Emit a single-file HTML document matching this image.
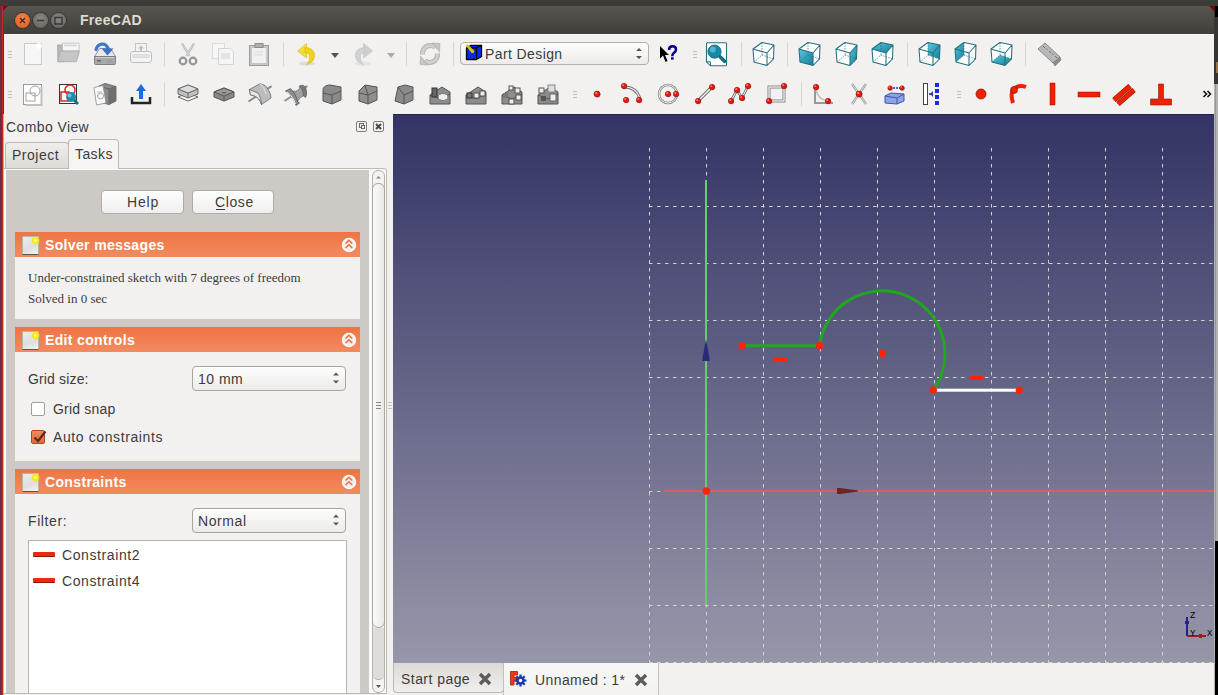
<!DOCTYPE html>
<html><head><meta charset="utf-8">
<style>
*{box-sizing:border-box}
html,body{margin:0;padding:0}
body{width:1218px;height:695px;overflow:hidden;position:relative;background:#3d3c38;font-family:"Liberation Sans",sans-serif;color:#3c3c3c}
.a{position:absolute}
.t{position:absolute;white-space:nowrap;line-height:1}
#lstrip{left:0;top:6px;width:3px;height:689px;background:#6b2c48;border-right:1px solid #c0282c}
#rstrip{left:1214px;top:6px;width:4px;height:689px;background:#363531}
#title{left:3px;top:6px;width:1211px;height:28px;background:linear-gradient(#57564f,#3f3e3a);border-radius:5px 5px 0 0}
#win{left:3px;top:34px;width:1211px;height:661px;background:#f2f1f0;border-top:1px solid #fbfbfa}
.wbtn{position:absolute;top:13px;width:15px;height:15px;border-radius:50%}
.grip{position:absolute;width:4px;height:8px;background:repeating-linear-gradient(#b9b6b0 0 1px,transparent 1px 3px)}
.sep{position:absolute;width:1px;background:#d4d1cc}
.ic{position:absolute}
.hdr{position:absolute;left:15px;width:345px;height:25px;background:linear-gradient(#ef7443,#f28b60)}
.hdr .tt{position:absolute;left:30px;top:6px;font-weight:bold;font-size:14px;color:#fff;line-height:1;letter-spacing:0.35px}
.hdr .pic{position:absolute;left:6.5px;top:3.5px;width:17px;height:19px;background:linear-gradient(160deg,#ececec,#dedede 60%,#f4f4f4);border:1px solid #b8b2ae;border-bottom:1.5px solid #5c5550}
.hdr .pic:after{content:"";position:absolute;right:-2px;top:-1px;width:9px;height:9px;border-radius:50%;background:radial-gradient(#ffffd0 0,#f4f000 35%,rgba(244,230,0,.7) 55%,rgba(240,224,0,0) 72%)}
.hdr .col{position:absolute;left:327px;top:5px;width:15px;height:15px;border-radius:50%;background:#f6f4f2}
.body{position:absolute;left:15px;width:345px;background:#f2f1f0}
.lbl{font-size:14px;color:#3c3c3c;letter-spacing:0.6px}
.combo{position:absolute;border:1px solid #a8a49e;border-radius:4px;background:linear-gradient(#fdfdfd,#ecebe9)}
.btn{position:absolute;border:1px solid #b0ada8;border-radius:4px;background:linear-gradient(#fefefe,#f0efee)}
</style></head><body>
<div id="lstrip" class="a"></div>
<div id="rstrip" class="a"></div>
<div class="a" style="left:1215px;top:6px;width:3px;height:11px;background:#000"></div>
<div class="a" style="left:1216px;top:62px;width:2px;height:11px;background:#9a7448"></div>
<div class="a" style="left:1214px;top:84px;width:4px;height:457px;background:linear-gradient(90deg,#b6b3ae 0 1px,#888785 1px,#b2b1ad 60%,#b8b7b3)"></div><div class="a" style="left:1214px;top:541px;width:1px;height:154px;background:#b6b3ae"></div>
<div class="a" style="left:1215px;top:541px;width:3px;height:154px;background:#000"></div>
<div id="title" class="a"></div>
<svg class="a" style="left:0;top:6px" width="1218" height="6"><path d="M3 0H8L3 5Z" fill="#7a0c10"/><path d="M1209 0H1215V6Z" fill="#6a0a0e"/></svg>
<div class="wbtn" style="left:15px;background:radial-gradient(circle at 50% 35%,#f5834f,#e2541d);box-shadow:0 0 0 1px #3a3935"></div>
<div class="wbtn" style="left:33px;background:radial-gradient(circle at 50% 35%,#8a8983,#5e5d58);box-shadow:0 0 0 1px #3a3935"></div>
<div class="wbtn" style="left:51px;background:radial-gradient(circle at 50% 35%,#8a8983,#5e5d58);box-shadow:0 0 0 1px #3a3935"></div>
<div class="t" style="left:80px;top:13px;font-size:14px;font-weight:bold;color:#dfdbd2;letter-spacing:0.3px">FreeCAD</div>
<div id="win" class="a"></div>
<div class="a" style="left:3px;top:34px;width:1px;height:80px;background:#3d403d"></div><div class="a" style="left:3px;top:114px;width:1px;height:581px;background:#b0b1ae"></div>


<!-- TOOLBAR -->
<svg class="a" style="left:0;top:33px" width="1218" height="81" viewBox="0 33 1218 81"><defs><linearGradient id="tealg" x1="0" y1="0" x2="1" y2="1"><stop offset="0" stop-color="#5ec4dc"/><stop offset="1" stop-color="#137f98"/></linearGradient></defs><path d="M8 51.5h4M8 54.5h4M8 57.5h4" stroke="#c2bfba" stroke-width="1"/><path d="M8 91.5h4M8 94.5h4M8 97.5h4" stroke="#c2bfba" stroke-width="1"/><g transform="translate(21,42)"><rect x="3.5" y="1.5" width="17" height="21" fill="#f7f7f7" stroke="#c9c9c9"/><circle cx="18" cy="4" r="3" fill="#fff" opacity=".9"/></g><g transform="translate(57,42)"><path d="M0.5 3H5.5L7 4.5V19.7H1Z" fill="#b8b8b8" stroke="#a0a0a0" stroke-width=".8"/><path d="M5.5 1.2H22V9H5.5Z" fill="#f6f6f6" stroke="#bcbcbc" stroke-width=".8"/><path d="M7 3.5H20" stroke="#d4d4d4" stroke-width="1.5"/><path d="M3.5 9H22.5L19.5 19.7H0.5Z" fill="#c6c6c6" stroke="#a8a8a8" stroke-width=".8"/></g><g transform="translate(93,42)"><path d="M6.5 6.5H17.5L22.5 14.5H1.5Z" fill="#e9e9e9" stroke="#8a8a8a" stroke-width=".9"/><path d="M1.5 14.5H22.5V21.5Q22.5 22.5 21.5 22.5H2.5Q1.5 22.5 1.5 21.5Z" fill="#a9a9a9" stroke="#777" stroke-width=".9"/><path d="M2.5 15.5H21.5" stroke="#d0d0d0"/><rect x="4" y="18" width="4" height="1.6" fill="#6a6a6a"/><path d="M15 18v3M17 18v3M19 18v3" stroke="#939393" stroke-width=".8"/><path d="M3 7.5C5 1 12 0 15 6" stroke="#3e78c8" stroke-width="3.2" fill="none" stroke-linecap="round"/><path d="M8.5 6.5H20.5L14.5 13.5Z" fill="#3a72c4"/></g><g transform="translate(129,42)"><rect x="6.5" y="1.5" width="11" height="10" fill="#f2f2f2" stroke="#c4c4c4"/><path d="M12 3.5l-3 3h2v3h2v-3h2Z" fill="#bdbdbd"/><rect x="1.5" y="9.5" width="21" height="11" rx="2.5" fill="#f4f4f4" stroke="#bebebe"/><rect x="3.5" y="12.5" width="17" height="3" rx="1" fill="#e2e2e2" stroke="#cfcfcf" stroke-width=".6"/></g><rect x="164" y="42" width="1" height="24" fill="#d8d5d0"/><g transform="translate(176,42)"><path d="M6 1.5L13.5 14M18 1.5L10.5 14" stroke="#b9b9b9" stroke-width="2.4" fill="none"/><path d="M6 1.5L13.5 14M18 1.5L10.5 14" stroke="#d8d8d8" stroke-width="1" fill="none"/><circle cx="7" cy="19" r="3.3" fill="none" stroke="#959595" stroke-width="2.2"/><circle cx="17" cy="19" r="3.3" fill="none" stroke="#959595" stroke-width="2.2"/></g><g transform="translate(211,42)"><rect x="1.5" y="1.5" width="12" height="15" fill="#f6f6f6" stroke="#dcdcdc"/><path d="M7.5 6.5h12l3 3v13h-15Z" fill="#f4f4f4" stroke="#d4d4d4"/><rect x="10" y="11" width="9" height="6" fill="#e4e4e4"/></g><g transform="translate(247,42)"><rect x="2.5" y="3.5" width="19" height="20" fill="#c6c6c6" stroke="#9c9c9c"/><rect x="5" y="6" width="14" height="15" fill="#f0f0f0"/><rect x="8" y="1.5" width="8" height="4" fill="#b0b0b0" stroke="#8c8c8c"/><path d="M8 10h8M8 13h8" stroke="#d8d8d8"/></g><rect x="283" y="42" width="1" height="24" fill="#d8d5d0"/><g transform="translate(295,42)"><ellipse cx="12" cy="21.5" rx="8" ry="2" fill="#d8d6d2" opacity=".8"/><path d="M2.5 9L11.5 1.5V16Z" fill="#f2dc3a" stroke="#d8bc10" stroke-width=".6"/><path d="M10 5.5C16 5.5 19.5 9 19.5 13.5C19.5 18 16.5 21 11.5 22.5C14.5 19.5 15 16.5 14.5 14C14 11.5 12.5 10.5 10 10.5Z" fill="#f0d21c" stroke="#d4b40c" stroke-width=".6"/></g><path d="M331 53h8l-4 5Z" fill="#555"/><g transform="translate(351,42)"><ellipse cx="12" cy="21.5" rx="8" ry="2" fill="#e2e0dc" opacity=".8"/><g transform="translate(24 0) scale(-1 1)"><path d="M2.5 9L11.5 1.5V16Z" fill="#cfcfcf" stroke="#bdbdbd" stroke-width=".6"/><path d="M10 5.5C16 5.5 19.5 9 19.5 13.5C19.5 18 16.5 21 11.5 22.5C14.5 19.5 15 16.5 14.5 14C14 11.5 12.5 10.5 10 10.5Z" fill="#d2d2d2" stroke="#c0c0c0" stroke-width=".6"/></g></g><path d="M387 53h8l-4 5Z" fill="#aaa"/><rect x="406" y="42" width="1" height="24" fill="#d8d5d0"/><g transform="translate(418,42)"><path d="M4.5 12.5C4 7 8 3.5 12.5 3.5C15 3.5 16.5 4.5 17.5 5.5" stroke="#b4b4b4" stroke-width="5" fill="none"/><path d="M4.5 12.5C4 7 8 3.5 12.5 3.5C15 3.5 16.5 4.5 17.5 5.5" stroke="#d0d0d0" stroke-width="3" fill="none"/><path d="M14 1L22 1.5L21.5 10Z" fill="#c4c4c4" stroke="#aaa" stroke-width=".6"/><path d="M19.5 11.5C20 17 16 20.5 11.5 20.5C9 20.5 7.5 19.5 6.5 18.5" stroke="#b4b4b4" stroke-width="5" fill="none"/><path d="M19.5 11.5C20 17 16 20.5 11.5 20.5C9 20.5 7.5 19.5 6.5 18.5" stroke="#d0d0d0" stroke-width="3" fill="none"/><path d="M10 23L2 22.5L2.5 14Z" fill="#c4c4c4" stroke="#aaa" stroke-width=".6"/></g><rect x="453" y="42" width="1" height="24" fill="#d8d5d0"/><g transform="translate(656,42)"><path d="M4 4V16.5L7 13.5L9.5 20L11.5 19L9 13H13Z" fill="#000"/><path d="M13 8C13 5.5 14.5 4.2 16.5 4.2C18.5 4.2 20 5.5 20 7.5C20 9.5 18.7 10.3 17.5 11.2C16.5 12 16.3 12.8 16.3 14.2" stroke="#00008c" stroke-width="2.5" fill="none"/><rect x="15" y="15.3" width="2.7" height="2.3" fill="#00008c"/></g><path d="M693 51.5h4M693 54.5h4M693 57.5h4" stroke="#c2bfba" stroke-width="1"/><g transform="translate(704,42)"><path d="M6.5 0.8H21.5Q22.5 0.8 22.5 1.8V22.8Q22.5 23.8 21.5 23.8H6.5L2.5 19.8V1.8Q2.5 0.8 3.5 0.8Z" fill="#fff" stroke="#2a6e80" stroke-width="1.1"/><path d="M2.5 19.8H6.5V23.8" fill="none" stroke="#2a6e80" stroke-width="1"/><path d="M16.3 15L20.6 19.3" stroke="#0f6f86" stroke-width="3.6" stroke-linecap="round"/><circle cx="10.5" cy="9.6" r="6.6" fill="#148aa6" stroke="#0e5c70" stroke-width=".8"/><circle cx="8.8" cy="7.6" r="3" fill="#58bcd8" opacity=".85"/></g><rect x="741" y="42" width="1" height="24" fill="#d8d5d0"/><g transform="translate(752,42)"><path d="M1 7L10 0.5L22 3L21.5 17L15 23.5L2 20Z" fill="#fff"/><path d="M1 7L10 0.5L22 3L21.5 17L15 23.5L2 20Z M1 7L15 11L22 3 M15 11V23.5" stroke="#1f6f7f" stroke-width="1.05" fill="none" stroke-linejoin="round"/><path d="M10 1V13L2 20M10 13L21.5 17" stroke="#1f6f7f" stroke-width="0.8" stroke-dasharray="1.3 1.3" fill="none"/></g><rect x="787" y="42" width="1" height="24" fill="#d8d5d0"/><g transform="translate(798,42)"><path d="M1 7L10 0.5L22 3L21.5 17L15 23.5L2 20Z" fill="#fff"/><path d="M1 7L15 11L15 23.5L2 20Z" fill="url(#tealg)"/><path d="M1 7L10 0.5L22 3L21.5 17L15 23.5L2 20Z M1 7L15 11L22 3 M15 11V23.5" stroke="#1f6f7f" stroke-width="1.05" fill="none" stroke-linejoin="round"/><path d="M10 1V13L2 20M10 13L21.5 17" stroke="#1f6f7f" stroke-width="0.8" stroke-dasharray="1.3 1.3" fill="none"/></g><g transform="translate(835,42)"><path d="M1 7L10 0.5L22 3L21.5 17L15 23.5L2 20Z" fill="#fff"/><path d="M15 11L22 3L21.5 17L15 23.5Z" fill="url(#tealg)"/><path d="M1 7L10 0.5L22 3L21.5 17L15 23.5L2 20Z M1 7L15 11L22 3 M15 11V23.5" stroke="#1f6f7f" stroke-width="1.05" fill="none" stroke-linejoin="round"/><path d="M10 1V13L2 20M10 13L21.5 17" stroke="#1f6f7f" stroke-width="0.8" stroke-dasharray="1.3 1.3" fill="none"/></g><g transform="translate(871,42)"><path d="M1 7L10 0.5L22 3L21.5 17L15 23.5L2 20Z" fill="#fff"/><path d="M1 7L10 0.5L22 3L15 11Z" fill="url(#tealg)"/><path d="M1 7L10 0.5L22 3L21.5 17L15 23.5L2 20Z M1 7L15 11L22 3 M15 11V23.5" stroke="#1f6f7f" stroke-width="1.05" fill="none" stroke-linejoin="round"/><path d="M10 1V13L2 20M10 13L21.5 17" stroke="#1f6f7f" stroke-width="0.8" stroke-dasharray="1.3 1.3" fill="none"/></g><rect x="907" y="42" width="1" height="24" fill="#d8d5d0"/><g transform="translate(918,42)"><path d="M1 7L10 0.5L22 3L21.5 17L15 23.5L2 20Z" fill="#fff"/><path d="M10 0.5L22 3L21.5 17L10 13Z" fill="url(#tealg)"/><path d="M1 7L10 0.5L22 3L21.5 17L15 23.5L2 20Z M1 7L15 11L22 3 M15 11V23.5" stroke="#1f6f7f" stroke-width="1.05" fill="none" stroke-linejoin="round"/><path d="M10 1V13L2 20M10 13L21.5 17" stroke="#1f6f7f" stroke-width="0.8" stroke-dasharray="1.3 1.3" fill="none"/></g><g transform="translate(954,42)"><path d="M1 7L10 0.5L22 3L21.5 17L15 23.5L2 20Z" fill="#fff"/><path d="M1 7L10 0.5L10 13L2 20Z" fill="url(#tealg)"/><path d="M1 7L10 0.5L22 3L21.5 17L15 23.5L2 20Z M1 7L15 11L22 3 M15 11V23.5" stroke="#1f6f7f" stroke-width="1.05" fill="none" stroke-linejoin="round"/><path d="M10 1V13L2 20M10 13L21.5 17" stroke="#1f6f7f" stroke-width="0.8" stroke-dasharray="1.3 1.3" fill="none"/></g><g transform="translate(990,42)"><path d="M1 7L10 0.5L22 3L21.5 17L15 23.5L2 20Z" fill="#fff"/><path d="M2 20L10 13L21.5 17L15 23.5Z" fill="url(#tealg)"/><path d="M1 7L10 0.5L22 3L21.5 17L15 23.5L2 20Z M1 7L15 11L22 3 M15 11V23.5" stroke="#1f6f7f" stroke-width="1.05" fill="none" stroke-linejoin="round"/><path d="M10 1V13L2 20M10 13L21.5 17" stroke="#1f6f7f" stroke-width="0.8" stroke-dasharray="1.3 1.3" fill="none"/></g><rect x="1025" y="42" width="1" height="24" fill="#d8d5d0"/><g transform="translate(1037,42)"><path d="M1 7L8 1L23 15L16 21Z" fill="#b8b8b8" stroke="#8a8a8a"/><path d="M16 21L23 15L24 18L18 24Z" fill="#8c8c8c" stroke="#777" stroke-width=".6"/><path d="M6 4l2 2M9 6.5l1.5 1.5M12 9l2 2M15 11.5l1.5 1.5M18 14l2 2" stroke="#6e6e6e"/></g><g transform="translate(21,82)"><rect x="2.5" y="2.5" width="18" height="20" fill="#fff" stroke="#9a9a9a"/><path d="M20.5 5v18h-16" stroke="#c0c0c0" stroke-width="2" fill="none"/><circle cx="14" cy="9" r="5" fill="none" stroke="#a0a0a0"/><rect x="5" y="11" width="9" height="8" fill="none" stroke="#a0a0a0"/></g><g transform="translate(57,82)"><rect x="2.5" y="2.5" width="17" height="19" fill="#fff" stroke="#333"/><circle cx="13" cy="8" r="5" fill="none" stroke="#e02020" stroke-width="1.5"/><rect x="4" y="10" width="8" height="9" fill="none" stroke="#e02020" stroke-width="1.5"/><circle cx="14" cy="15" r="5" fill="#1d8aa8"/><circle cx="12.5" cy="13.5" r="2" fill="#6cc4dc"/><path d="M17 18l4 4" stroke="#186f86" stroke-width="3"/></g><g transform="translate(93,82)"><path d="M6 4L12 1.5L23 4.5V19L16 22.5L6 20Z" fill="#8a8a8a" stroke="#5a5a5a" stroke-width=".8"/><path d="M6 4L16 7L23 4.5M16 7V22.5" stroke="#5a5a5a" stroke-width=".8" fill="none"/><path d="M16 7L23 4.5V19L16 22.5Z" fill="#6e6e6e"/><path d="M1 5.5L10 3.5L13 21L3.5 23Z" fill="#fbfbfb" stroke="#8c8c8c" stroke-width=".8"/><circle cx="7.5" cy="14" r="3" fill="none" stroke="#9a9a9a" stroke-width=".9"/><path d="M4 10h5" stroke="#aaa" stroke-width=".8"/></g><g transform="translate(129,82)"><path d="M3 15v6h18v-6" stroke="#222" stroke-width="2.5" fill="none"/><path d="M12 2L17 9H14V17H10V9H7Z" fill="#1a6de0"/></g><rect x="164" y="82" width="1" height="24" fill="#d8d5d0"/><g transform="translate(176,82)"><path d="M2 15L12 11L22 15L12 19Z" fill="#fafafa" stroke="#666"/><path d="M2 7L12 3L22 7V12L12 16L2 12Z" fill="#c0c0c0" stroke="#6a6a6a"/><path d="M2 7L12 11L22 7M12 11V16" stroke="#6a6a6a" fill="none"/><path d="M2 7L12 3L22 7L12 11Z" fill="#dcdcdc" stroke="#6a6a6a"/></g><g transform="translate(212,82)"><path d="M2 10L12 6L22 10V15L12 19L2 15Z" fill="#888" stroke="#555"/><path d="M2 10L12 14L22 10L12 6Z" fill="#9a9a9a" stroke="#555"/><path d="M12 14V19" stroke="#555"/><path d="M9 10h6l-3 2Z" fill="#666"/></g><g transform="translate(248,82)"><path d="M0.5 19.5L23.5 4.2" stroke="#8c8c8c" stroke-width="2"/><path d="M1.3 7.5L12 1.8C16 2.5 19 4.5 20.5 8C22 11 23 13 23 16L13.5 22.5C12 18 10 15 5 13.5L2.5 13Z" fill="#bcbcbc" stroke="#6a6a6a" stroke-width=".8"/><path d="M1.3 7.5L10 11C12 14 13.5 18 13.5 22.5C12 18 10 15 5 13.5L2.5 13Z" fill="#e4e4e4" stroke="#6a6a6a" stroke-width=".8"/><path d="M12 2C15 4 17 8 18 12" stroke="#d6d6d6" stroke-width="1.5" fill="none"/></g><g transform="translate(284,82)"><path d="M0.5 19L23.5 4" stroke="#8c8c8c" stroke-width="1.8"/><path d="M15 4.5C17.5 2.5 20.5 3 21.5 5.5C23 9 23 13 21.5 15.5L19 13.5C19 10 18 7 15 4.5Z" fill="#7a7a7a" stroke="#555" stroke-width=".7"/><path d="M7 8.5C11 10.5 14 9 16.5 5C18.5 8 19.5 11 19 14C16.5 15.5 14.5 17 13.5 20Z" fill="#a0a0a0" stroke="#666" stroke-width=".7"/><path d="M1.5 9L6.5 6.5C10 10 13 15 13.5 20L15.5 21L12 23.5C10.5 18 7 13 1.5 9Z" fill="#8c8c8c" stroke="#4e4e4e" stroke-width=".7"/><path d="M3 10C7 13 10 17 11.5 22" stroke="#f4f4f4" stroke-width="1" fill="none"/></g><g transform="translate(320,82)"><path d="M3 8C3 5 6 3 10 3L21 5V18L12 22L3 19Z" fill="#8a8a8a" stroke="#555"/><path d="M3 11L12 13L21 9M12 13V22" stroke="#555" fill="none"/></g><g transform="translate(356,82)"><path d="M3 9L9 3L21 5V18L12 22L3 19Z" fill="#8e8e8e" stroke="#555"/><path d="M3 11L12 13L21 9M12 13V22M9 3L12 13" stroke="#555" fill="none"/></g><g transform="translate(392,82)"><path d="M6 5L13 3L21 5V18L12 22L3 19Z" fill="#8a8a8a" stroke="#555"/><path d="M6 5L12 13L21 9M12 13V22" stroke="#555" fill="none"/></g><g transform="translate(428,82)"><path d="M2 22V13L14 5L22 10V22Z" fill="#8c8c8c" stroke="#555"/><path d="M2 13L12 17L22 12" stroke="#555" fill="none"/><rect x="4" y="6" width="5" height="9" fill="#666" stroke="#333"/><ellipse cx="15" cy="15" rx="5" ry="3.5" fill="#eee" stroke="#777"/></g><g transform="translate(464,82)"><path d="M2 22V13L14 5L22 10V22Z" fill="#8c8c8c" stroke="#555"/><path d="M2 13L12 17L22 12" stroke="#555" fill="none"/><rect x="3" y="11" width="5" height="5" fill="#777" stroke="#333"/><rect x="10" y="11" width="5" height="5" fill="#eee" stroke="#555"/><rect x="16" y="9" width="5" height="5" fill="#eee" stroke="#555"/></g><g transform="translate(500,82)"><path d="M2 22V13L14 5L22 10V22Z" fill="#8c8c8c" stroke="#555"/><path d="M2 13L12 17L22 12" stroke="#555" fill="none"/><rect x="3" y="11" width="5" height="5" fill="#777"/><rect x="9" y="4" width="4" height="4" fill="#eee" stroke="#555"/><rect x="15" y="6" width="5" height="5" fill="#eee" stroke="#555"/><rect x="16" y="13" width="5" height="5" fill="#eee" stroke="#555"/><rect x="9" y="17" width="5" height="5" fill="#eee" stroke="#555"/></g><g transform="translate(536,82)"><path d="M2 22V13L14 5L22 10V22Z" fill="#8c8c8c" stroke="#555"/><path d="M2 13L12 17L22 12" stroke="#555" fill="none"/><rect x="3" y="6" width="5" height="5" fill="#eee" stroke="#555"/><rect x="12" y="3" width="7" height="7" fill="#ddd" stroke="#888"/><rect x="5" y="14" width="5" height="5" fill="#555"/><rect x="14" y="12" width="6" height="7" fill="#eee" stroke="#666"/></g><path d="M573 91.5h4M573 94.5h4M573 97.5h4" stroke="#c2bfba" stroke-width="1"/><g transform="translate(585,82)"><circle cx="12.6" cy="12.6" r="3" fill="#555" opacity=".5"/><circle cx="12" cy="12" r="3" fill="#e8190c" stroke="#a00a00" stroke-width=".6"/><circle cx="11.2" cy="11.1" r="1.0499999999999998" fill="#ff9a80"/></g><g transform="translate(620,82)"><path d="M4 5C13 5 18 10 20 17" stroke="#777" stroke-width="3" fill="none"/><path d="M4 5C13 5 18 10 20 17" stroke="#eee" stroke-width="1.2" fill="none"/><circle cx="4.6" cy="4.6" r="2.7" fill="#555" opacity=".5"/><circle cx="4" cy="4" r="2.7" fill="#e8190c" stroke="#a00a00" stroke-width=".6"/><circle cx="3.2" cy="3.1" r="0.945" fill="#ff9a80"/><circle cx="6.6" cy="18.6" r="2.7" fill="#555" opacity=".5"/><circle cx="6" cy="18" r="2.7" fill="#e8190c" stroke="#a00a00" stroke-width=".6"/><circle cx="5.2" cy="17.1" r="0.945" fill="#ff9a80"/><circle cx="19.6" cy="18.6" r="2.7" fill="#555" opacity=".5"/><circle cx="19" cy="18" r="2.7" fill="#e8190c" stroke="#a00a00" stroke-width=".6"/><circle cx="18.2" cy="17.1" r="0.945" fill="#ff9a80"/></g><g transform="translate(656,82)"><circle cx="12" cy="12" r="9" fill="none" stroke="#888" stroke-width="2.5"/><circle cx="12" cy="12" r="9" fill="none" stroke="#eee" stroke-width="1"/><circle cx="12.6" cy="12.6" r="2.7" fill="#555" opacity=".5"/><circle cx="12" cy="12" r="2.7" fill="#e8190c" stroke="#a00a00" stroke-width=".6"/><circle cx="11.2" cy="11.1" r="0.945" fill="#ff9a80"/><circle cx="20.6" cy="12.6" r="2.7" fill="#555" opacity=".5"/><circle cx="20" cy="12" r="2.7" fill="#e8190c" stroke="#a00a00" stroke-width=".6"/><circle cx="19.2" cy="11.1" r="0.945" fill="#ff9a80"/></g><g transform="translate(693,82)"><path d="M5 19L19 5" stroke="#6a6a6a" stroke-width="3.2"/><path d="M5 19L19 5" stroke="#fafafa" stroke-width="1.4"/><circle cx="5.6" cy="19.6" r="2.7" fill="#555" opacity=".5"/><circle cx="5" cy="19" r="2.7" fill="#e8190c" stroke="#a00a00" stroke-width=".6"/><circle cx="4.2" cy="18.1" r="0.945" fill="#ff9a80"/><circle cx="19.6" cy="5.6" r="2.7" fill="#555" opacity=".5"/><circle cx="19" cy="5" r="2.7" fill="#e8190c" stroke="#a00a00" stroke-width=".6"/><circle cx="18.2" cy="4.1" r="0.945" fill="#ff9a80"/></g><g transform="translate(728,82)"><path d="M3 19L9 8L14 16L20 4" stroke="#6a6a6a" stroke-width="2.6" fill="none"/><path d="M3 19L9 8L14 16L20 4" stroke="#fafafa" stroke-width="1" fill="none"/><circle cx="3.6" cy="19.6" r="2.7" fill="#555" opacity=".5"/><circle cx="3" cy="19" r="2.7" fill="#e8190c" stroke="#a00a00" stroke-width=".6"/><circle cx="2.2" cy="18.1" r="0.945" fill="#ff9a80"/><circle cx="9.6" cy="8.6" r="2.7" fill="#555" opacity=".5"/><circle cx="9" cy="8" r="2.7" fill="#e8190c" stroke="#a00a00" stroke-width=".6"/><circle cx="8.2" cy="7.1" r="0.945" fill="#ff9a80"/><circle cx="14.6" cy="16.6" r="2.7" fill="#555" opacity=".5"/><circle cx="14" cy="16" r="2.7" fill="#e8190c" stroke="#a00a00" stroke-width=".6"/><circle cx="13.2" cy="15.1" r="0.945" fill="#ff9a80"/><circle cx="20.6" cy="4.6" r="2.7" fill="#555" opacity=".5"/><circle cx="20" cy="4" r="2.7" fill="#e8190c" stroke="#a00a00" stroke-width=".6"/><circle cx="19.2" cy="3.1" r="0.945" fill="#ff9a80"/></g><g transform="translate(765,82)"><rect x="4" y="5" width="15" height="14" fill="none" stroke="#6a6a6a" stroke-width="2.8"/><rect x="4" y="5" width="15" height="14" fill="none" stroke="#fafafa" stroke-width="1.3"/><circle cx="4.6" cy="19.6" r="2.7" fill="#555" opacity=".5"/><circle cx="4" cy="19" r="2.7" fill="#e8190c" stroke="#a00a00" stroke-width=".6"/><circle cx="3.2" cy="18.1" r="0.945" fill="#ff9a80"/><circle cx="19.6" cy="4.6" r="2.7" fill="#555" opacity=".5"/><circle cx="19" cy="4" r="2.7" fill="#e8190c" stroke="#a00a00" stroke-width=".6"/><circle cx="18.2" cy="3.1" r="0.945" fill="#ff9a80"/></g><rect x="801" y="82" width="1" height="24" fill="#d8d5d0"/><g transform="translate(811,82)"><path d="M4 7V21H22" stroke="#999" stroke-width="2" fill="none"/><path d="M5 7C6 14 10 18 17 19" stroke="#bbb" stroke-width="1.5" fill="none"/><circle cx="5.6" cy="5.6" r="2.7" fill="#555" opacity=".5"/><circle cx="5" cy="5" r="2.7" fill="#e8190c" stroke="#a00a00" stroke-width=".6"/><circle cx="4.2" cy="4.1" r="0.945" fill="#ff9a80"/><circle cx="17.6" cy="19.6" r="2.7" fill="#555" opacity=".5"/><circle cx="17" cy="19" r="2.7" fill="#e8190c" stroke="#a00a00" stroke-width=".6"/><circle cx="16.2" cy="18.1" r="0.945" fill="#ff9a80"/></g><g transform="translate(847,82)"><path d="M5 2L19 22M19 2L5 22" stroke="#999" stroke-width="2.2"/><path d="M5 2L19 22M19 2L5 22" stroke="#eee" stroke-width=".8"/><circle cx="12.6" cy="12.6" r="3" fill="#555" opacity=".5"/><circle cx="12" cy="12" r="3" fill="#e8190c" stroke="#a00a00" stroke-width=".6"/><circle cx="11.2" cy="11.1" r="1.0499999999999998" fill="#ff9a80"/></g><g transform="translate(883,82)"><path d="M7 6L17 6" stroke="#2a3aa0" stroke-width="1.5" stroke-dasharray="2 1"/><circle cx="7.6" cy="6.6" r="2.2" fill="#555" opacity=".5"/><circle cx="7" cy="6" r="2.2" fill="#e8190c" stroke="#a00a00" stroke-width=".6"/><circle cx="6.2" cy="5.1" r="0.77" fill="#ff9a80"/><circle cx="19.6" cy="6.6" r="2.2" fill="#555" opacity=".5"/><circle cx="19" cy="6" r="2.2" fill="#e8190c" stroke="#a00a00" stroke-width=".6"/><circle cx="18.2" cy="5.1" r="0.77" fill="#ff9a80"/><path d="M2 14L8 11L21 12V19L14 22L2 21Z" fill="#8aa4e8" stroke="#3a56b0"/><path d="M2 14L14 16L21 12M14 16V22" stroke="#3a56b0" fill="none"/></g><g transform="translate(920,82)"><rect x="3.5" y="1.5" width="4" height="21" fill="#fff" stroke="#444"/><path d="M9 12h4" stroke="#224" stroke-width="1.5"/><path d="M10 12l3-3v6Z" fill="#2a3ad0"/><g fill="#1a2ae0"><rect x="15" y="1" width="4" height="4"/><rect x="15" y="7" width="4" height="4"/><rect x="15" y="13" width="4" height="4"/><rect x="15" y="19" width="4" height="4"/></g></g><path d="M957 91.5h4M957 94.5h4M957 97.5h4" stroke="#c2bfba" stroke-width="1"/><g transform="translate(969,82)"><circle cx="12" cy="12" r="5" fill="#f02000" stroke="#8a1a00" stroke-width=".8"/></g><g transform="translate(1005,82)"><path d="M8 21C6 15 6 10 9 7C12 4 16 3 21 5" stroke="#f02000" stroke-width="4" fill="none"/><circle cx="9" cy="8" r="3.5" fill="#f02000" stroke="#8a1a00" stroke-width=".7"/></g><rect x="1050" y="83" width="5" height="22" fill="#f02000" stroke="#8a1a00" stroke-width=".5"/><rect x="1078" y="92" width="22" height="5" fill="#f02000" stroke="#8a1a00" stroke-width=".5"/><g transform="translate(1112,82)"><path d="M2 18L18 4M6 22L22 8" stroke="#8a1a00" stroke-width="5.2"/><path d="M2 18L18 4M6 22L22 8" stroke="#f02000" stroke-width="4"/></g><path d="M1158.5 84h5v15h8v6h-21v-6h8Z" fill="#f02000" stroke="#8a1a00" stroke-width=".6"/><path d="M1203.5 91l3 3-3 3M1207.5 91l3 3-3 3" stroke="#111" stroke-width="1.6" fill="none"/></svg>
<div class="combo" style="left:460px;top:42px;width:189px;height:23px;border-color:#b3afa9"></div>
<svg class="a" style="left:465px;top:44px" width="18" height="18"><path d="M1.5 4H11.5V15.5H1.5Z M1.5 4L6 1.3H16.5L11.5 4Z M11.5 4L16.5 1.3V12.5L11.5 15.5Z" fill="#0a28f4" stroke="#000" stroke-width="1.3" stroke-linejoin="round"/><path d="M0.8 1.8L2.6 0.3L9.3 6.8L8.6 8.6L6.8 9.2Z" fill="#e6bc08"/><path d="M6.8 9.2L8.6 8.6L9.3 6.8Z" fill="#c8c8c8"/></svg>
<div class="t lbl" style="left:485px;top:47px;font-size:14px;letter-spacing:0.4px">Part Design</div>
<svg class="a" style="left:634px;top:46px" width="10" height="16"><path d="M2 5L5 2L8 5Z M2 10L5 13L8 10Z" fill="#555"/></svg>
<!-- /TOOLBAR -->
<!-- PANEL -->
<div class="t lbl" style="left:6px;top:120px;font-size:14px;letter-spacing:0.4px">Combo View</div>
<div class="a" style="left:356px;top:121px;width:11px;height:11px;border:1px solid #807d78;border-radius:2px"></div>
<div class="a" style="left:359px;top:123px;width:5px;height:5px;border:1px solid #6a6762"></div>
<div class="a" style="left:361px;top:125px;width:4px;height:4px;border:1px solid #6a6762;background:#f2f1f0"></div>
<div class="a" style="left:373px;top:121px;width:11px;height:11px;border:1px solid #807d78;border-radius:2px"></div>
<svg class="a" style="left:373px;top:121px" width="11" height="11"><path d="M3 3L8 8M8 3L3 8" stroke="#4a4844" stroke-width="2"/></svg>
<!-- tabs -->
<div class="a" style="left:5px;top:142px;width:64px;height:27px;border:1px solid #bdb9b3;border-bottom:none;border-radius:4px 4px 0 0;background:linear-gradient(#efeeec,#dcdad6)"></div>
<div class="t lbl" style="left:12px;top:148px;font-size:14px;letter-spacing:0.5px">Project</div>
<div class="a" style="left:68px;top:139px;width:51px;height:30px;border:1px solid #bdb9b3;border-bottom:none;border-radius:4px 4px 0 0;background:#f6f5f4;z-index:2"></div>
<div class="t lbl" style="left:75px;top:147px;font-size:14px;letter-spacing:0.4px;z-index:3">Tasks</div>
<!-- frame -->
<div class="a" style="left:3px;top:168px;width:384px;height:526px;border:1px solid #bcb8b2;border-radius:0 3px 0 0;background:#fbfbfa"></div>
<div class="a" style="left:6px;top:170px;width:363px;height:523px;background:#cdcac6"></div>
<!-- scrollbar -->
<div class="a" style="left:372px;top:170px;width:13px;height:523px;border:1px solid #b5b1ab;border-radius:6px;background:#f4f3f2"></div>
<div class="a" style="left:372px;top:183px;width:13px;height:445px;border:1px solid #a9a59f;border-radius:6px;background:linear-gradient(90deg,#fbfbfa,#e9e8e6)"></div>
<div class="a" style="left:373px;top:628px;width:11px;height:52px;background:#dfddda;border-radius:0 0 5px 5px;border-bottom:1px solid #b5b1ab"></div>
<svg class="a" style="left:372px;top:170px" width="13" height="523"><path d="M4 8.5L6.5 6L9 8.5Z" fill="#8a8782"/><path d="M4 515H9L6.5 518Z" fill="#5a5853"/><path d="M4 232.5h5M4 235.5h5M4 238.5h5" stroke="#8a8782" stroke-width="1"/></svg>
<svg class="a" style="left:386px;top:114px" width="7" height="581"><path d="M2 288.5h4M2 291.5h4M2 294.5h4" stroke="#c4c1bc" stroke-width="1"/></svg>
<!-- buttons -->
<div class="btn" style="left:101px;top:190px;width:83px;height:24px"></div>
<div class="t lbl" style="left:127px;top:195px;letter-spacing:0.8px">Help</div>
<div class="btn" style="left:192px;top:190px;width:82px;height:24px"></div>
<div class="t lbl" style="left:215px;top:195px">Close</div>
<div class="a" style="left:216px;top:209px;width:9px;height:1px;background:#3c3c3c"></div>

<!-- Solver messages -->
<div class="hdr" style="top:232px"><div class="pic"></div><div class="tt">Solver messages</div><svg class="a" style="left:326px;top:5px" width="16" height="16"><circle cx="8" cy="8" r="6.6" fill="#f0eeec" stroke="#fff" stroke-width="1.2"/><path d="M4.6 6.6L7.9 3.3L11.2 6.6M4.6 11.1L7.9 7.8L11.2 11.1" stroke="#f06a38" stroke-width="1.4" fill="none"/></svg></div>
<div class="body" style="top:257px;height:62px"></div>
<div class="t" style="left:28px;top:271px;font-family:'Liberation Serif',serif;font-size:13px;color:#3a3a3a">Under-constrained sketch with 7 degrees of freedom</div>
<div class="t" style="left:28px;top:292px;font-family:'Liberation Serif',serif;font-size:13px;color:#3a3a3a">Solved in 0 sec</div>

<!-- Edit controls -->
<div class="hdr" style="top:327px"><div class="pic"></div><div class="tt">Edit controls</div><svg class="a" style="left:326px;top:5px" width="16" height="16"><circle cx="8" cy="8" r="6.6" fill="#f0eeec" stroke="#fff" stroke-width="1.2"/><path d="M4.6 6.6L7.9 3.3L11.2 6.6M4.6 11.1L7.9 7.8L11.2 11.1" stroke="#f06a38" stroke-width="1.4" fill="none"/></svg></div>
<div class="body" style="top:352px;height:109px"></div>
<div class="t lbl" style="left:28px;top:372px;letter-spacing:0.15px">Grid size:</div>
<div class="combo" style="left:192px;top:366px;width:154px;height:25px"></div>
<div class="t lbl" style="left:198px;top:372px;letter-spacing:0.5px">10 mm</div><svg class="a" style="left:331px;top:370px" width="10" height="16"><path d="M2 5.5L5 2.5L8 5.5Z M2 10.5L5 13.5L8 10.5Z" fill="#5a5853"/></svg>
<div class="a" style="left:31px;top:402px;width:14px;height:14px;border:1px solid #a29e98;border-radius:2px;background:#fff"></div>
<div class="t lbl" style="left:53px;top:402px;letter-spacing:0.2px">Grid snap</div>
<div class="a" style="left:31px;top:430px;width:14px;height:14px;border:1px solid #b2481f;border-radius:2px;background:linear-gradient(#f08a5c,#e8693a)"></div>
<svg class="a" style="left:31px;top:428px" width="17" height="17"><path d="M3.5 9.5L7 13L14.5 3.5" stroke="#4a3028" stroke-width="2.2" fill="none"/></svg>
<div class="t lbl" style="left:53px;top:430px;letter-spacing:0.6px">Auto constraints</div>

<!-- Constraints -->
<div class="hdr" style="top:469px"><div class="pic"></div><div class="tt">Constraints</div><svg class="a" style="left:326px;top:5px" width="16" height="16"><circle cx="8" cy="8" r="6.6" fill="#f0eeec" stroke="#fff" stroke-width="1.2"/><path d="M4.6 6.6L7.9 3.3L11.2 6.6M4.6 11.1L7.9 7.8L11.2 11.1" stroke="#f06a38" stroke-width="1.4" fill="none"/></svg></div>
<div class="body" style="top:494px;height:199px"></div>
<div class="t lbl" style="left:28px;top:514px">Filter:</div>
<div class="combo" style="left:192px;top:508px;width:154px;height:25px"></div>
<div class="t lbl" style="left:198px;top:514px">Normal</div><svg class="a" style="left:331px;top:512px" width="10" height="16"><path d="M2 5.5L5 2.5L8 5.5Z M2 10.5L5 13.5L8 10.5Z" fill="#5a5853"/></svg>
<div class="a" style="left:28px;top:540px;width:319px;height:153px;border:1px solid #b8b4ae;border-bottom:none;background:#fff"></div>
<div class="a" style="left:33px;top:552px;width:22px;height:5px;background:#f0280a;border-bottom:1px solid #8a1a0a;border-radius:1px"></div>
<div class="t lbl" style="left:62px;top:548px">Constraint2</div>
<div class="a" style="left:33px;top:578px;width:22px;height:5px;background:#f0280a;border-bottom:1px solid #8a1a0a;border-radius:1px"></div>
<div class="t lbl" style="left:62px;top:574px">Constraint4</div>

<!-- 3D view -->
<div class="a" id="view" style="left:393px;top:114px;width:821px;height:549px;background:linear-gradient(#333365,#9797aa);border-top:1px solid #23235a"></div>
<svg class="a" style="left:393px;top:114px" width="821" height="549" viewBox="393 114 821 549"><path d="M649.5 148V663M706.5 148V663M763.5 148V663M820.5 148V663M877.5 148V663M934.5 148V663M991.5 148V663M1048.5 148V663M1105.5 148V663M1162.5 148V663" stroke="#d2d2cc" stroke-width="1" stroke-dasharray="3.5 4.5" fill="none"/><path d="M649 206.5H1214M649 263.5H1214M649 320.5H1214M649 377.5H1214M649 434.5H1214M649 491.5H1214M649 548.5H1214M649 605.5H1214M649 662.5H1214" stroke="#d2d2cc" stroke-width="1" stroke-dasharray="3.5 4.5" fill="none"/>
<rect x="705" y="180" width="2" height="425" fill="#5fd35f"/>
<rect x="664" y="490" width="550" height="2" fill="#d06464"/>
<path d="M706 339L709.5 358V361H702.5V358Z" fill="#2a2a78"/>
<path d="M837 488H840L858 490.5V491.5L840 494H837Z" fill="#6c2424"/>
<path d="M742 345.7H819.5A63 63 0 1 1 933.4 390.2" stroke="#22a622" stroke-width="3" fill="none"/>
<rect x="933.4" y="388.7" width="85.8" height="3" fill="#fff"/>
<g fill="#ff2400">
<circle cx="742" cy="345.7" r="3.6"/><circle cx="819.5" cy="345.7" r="3.6"/><circle cx="882.5" cy="353.4" r="3.6"/>
<circle cx="933.4" cy="390.2" r="3.6"/><circle cx="1019.2" cy="390.2" r="3.6"/><circle cx="706.4" cy="491" r="3.8"/>
<rect x="773" y="358" width="14" height="4"/><rect x="969" y="376" width="14" height="4"/>
</g>
<rect x="1186" y="617" width="2" height="19" fill="#22228a"/><rect x="1185" y="621" width="4" height="3" fill="#22228a"/>
<rect x="1187" y="635" width="19" height="2" fill="#9a1c1c"/><rect x="1199" y="634" width="3" height="4" fill="#9a1c1c"/>
<text x="1190" y="618" font-family="Liberation Mono" font-size="9" fill="#000">Z</text>
<text x="1190" y="636" font-family="Liberation Mono" font-size="9" fill="#000">Y</text>
<text x="1207" y="636" font-family="Liberation Mono" font-size="9" fill="#000">X</text>
</svg>


<!-- BOTTOM -->
<div class="a" style="left:393px;top:663px;width:111px;height:30px;border:1px solid #bcb8b2;border-top:none;border-radius:0 0 4px 4px;background:linear-gradient(#dcdad6,#f0efee)"></div>
<div class="t lbl" style="left:401px;top:672px;letter-spacing:0.45px">Start page</div>
<svg class="a" style="left:478px;top:672px" width="14" height="14"><path d="M2 2L12 12M12 2L2 12" stroke="#5e5c58" stroke-width="3.4"/></svg>
<div class="a" style="left:503px;top:663px;width:156px;height:40px;border:1px solid #c4c0ba;border-top:none;border-radius:0 0 4px 4px;background:linear-gradient(#f7f7f6,#f2f1f0)"></div>
<svg class="a" style="left:510px;top:671px" width="17" height="16"><path d="M0.5 0.5h7v3.5H4v2.5h3V10H4v4H0.5Z" fill="#ee3a12" stroke="#a02000" stroke-width=".8"/><g transform="translate(10.5 9.5)"><circle r="4.3" fill="#1a3aa8"/><path d="M0 -6V6M-6 0H6M-4.2 -4.2L4.2 4.2M4.2 -4.2L-4.2 4.2" stroke="#1a3aa8" stroke-width="2.2"/><circle r="1.7" fill="#fff"/></g></svg>
<div class="t lbl" style="left:535px;top:673px;letter-spacing:0.4px">Unnamed : 1*</div>
<svg class="a" style="left:634px;top:673px" width="14" height="14"><path d="M2 2L12 12M12 2L2 12" stroke="#5e5c58" stroke-width="3.4"/></svg>
<svg class="a" style="left:15px;top:13px" width="52" height="15"><path d="M5 5L10 10M10 5L5 10" stroke="#3a2a20" stroke-width="1.3"/><path d="M40 4.5h7v6.5h-7Z" fill="none" stroke="#3a3935" stroke-width="1.4"/><path d="M22 7.5h7" stroke="#3a3935" stroke-width="1.6"/></svg>
<!-- /BOTTOM -->
</body></html>
